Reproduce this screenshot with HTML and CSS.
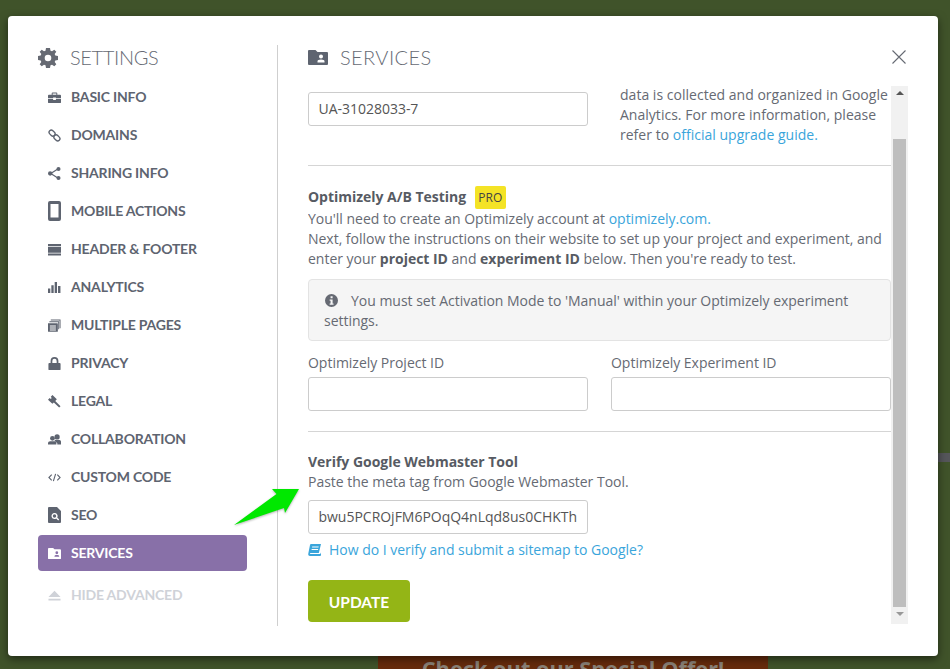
FILE: index.html
```html
<!DOCTYPE html>
<html lang="en">
<head>
<meta charset="utf-8">
<title>Settings - Services</title>
<link rel="stylesheet" href="styles.css">
</head>
<body>
<div class="backdrop-banner">Check out our Special Offer!</div>
<div class="backdrop-mark"></div>
<div class="modal">
  <aside class="sidebar">
    <h2 class="side-title">
      <svg class="gear" viewBox="0 0 20 20"><path d="M8 0h4l.5 2.700 1.500.6L16.300 1.700 18.300 3.700 16.700 6l.6 1.500 2.700.5v4l-2.700.5-.6 1.500 1.600 2.300-2 2-2.300-1.600-1.500.6-.5 2.700H8l-.5-2.700-1.500-.6-2.300 1.600-2-2L3.300 14l-.6-1.500L0 12V8l2.700-.5.6-1.500L1.700 3.700l2-2L6 3.300l1.500-.6z M10 6.700a3.300 3.300 0 1 0 0 6.600 3.300 3.300 0 0 0 0-6.600z" fill-rule="evenodd"/></svg>
      <span class="side-title-text">SETTINGS</span>
    </h2>
    <nav class="nav">
      <a class="nav-item"><svg class="ico" viewBox="0 0 14 14"><path d="M5 1.500h4a1 1 0 0 1 1 1V4h3a1 1 0 0 1 1 1v2.800H8.500V7h-3v.8H0V5a1 1 0 0 1 1-1h3V2.500a1 1 0 0 1 1-1zM5 4h4V2.600H5zM0 8.600h5.500v1h3v-1H14V12a1 1 0 0 1-1 1H1a1 1 0 0 1-1-1z" fill-rule="evenodd"/></svg>BASIC INFO</a>
      <a class="nav-item"><svg class="ico" viewBox="0 0 14 14"><g fill="none" stroke="currentColor" stroke-width="1.400"><rect x="-3.600" y="-2.400" width="7.200" height="4.800" rx="2.400" transform="translate(4.400 4.400) rotate(45)"/><rect x="-3.600" y="-2.400" width="7.200" height="4.800" rx="2.400" transform="translate(9.600 9.600) rotate(45)"/></g></svg>DOMAINS</a>
      <a class="nav-item"><svg class="ico" viewBox="0 0 14 14"><path d="M11 2 3 7l8 5" fill="none" stroke="currentColor" stroke-width="1.300"/><circle cx="11.300" cy="2.200" r="2.200"/><circle cx="2.300" cy="7" r="2.300"/><circle cx="11.300" cy="11.800" r="2.200"/></svg>SHARING INFO</a>
      <a class="nav-item"><svg class="ico ico-tall" viewBox="0 0 13 20"><path d="M2 0h9a2 2 0 0 1 2 2v16a2 2 0 0 1-2 2H2a2 2 0 0 1-2-2V2a2 2 0 0 1 2-2zm.5 3v13.500h8V3z" fill-rule="evenodd"/></svg>MOBILE ACTIONS</a>
      <a class="nav-item"><svg class="ico" viewBox="0 0 14 14"><path d="M0 1h14v2.400H0zM0 4.200h14v6.200H0zM0 11.200h14V13.500H0z"/></svg>HEADER &amp; FOOTER</a>
      <a class="nav-item"><svg class="ico" viewBox="0 0 14 14"><path d="M0 8h2.500v5H0zM3.600 4.500h2.500V13H3.600zM7.200 1h2.500v12H7.200zM10.800 5.500h2.600V13h-2.600z"/></svg>ANALYTICS</a>
      <a class="nav-item"><svg class="ico" viewBox="0 0 14 14"><path d="M3 .5h10.500V10h-1V1.500H3zM1.500 2.500H12V11h-1V3.500H1.500zM0 4.500h10a.6.600 0 0 1 .6.600v8a.6.600 0 0 1-.6.600H.6a.6.600 0 0 1-.6-.6zM2 7v1h6.500V7zm0 2.200v1h6.500v-1zm0 2.200v1h6.500v-1z" fill-rule="evenodd"/></svg>MULTIPLE PAGES</a>
      <a class="nav-item"><svg class="ico" viewBox="0 0 14 15"><path d="M7 0a4.500 4.500 0 0 1 4.500 4.500V7H13a1 1 0 0 1 1 1v6a1 1 0 0 1-1 1H1a1 1 0 0 1-1-1V8a1 1 0 0 1 1-1h1.500V4.500A4.500 4.500 0 0 1 7 0zm0 2a2.500 2.500 0 0 0-2.500 2.500V7h5V4.500A2.500 2.500 0 0 0 7 2z" fill-rule="evenodd"/></svg>PRIVACY</a>
      <a class="nav-item"><svg class="ico" viewBox="0 0 14 14"><path d="M4.800 0 9.500 4.700 7.800 6.400 13.500 12l-1.500 1.500L6.300 8 4.700 9.500 0 5l1.800-1.800 1.200 1 1-1-1-1.200z"/></svg>LEGAL</a>
      <a class="nav-item"><svg class="ico" viewBox="0 0 14 14"><circle cx="9.800" cy="4.200" r="2.800"/><path d="M7.500 7.500h4.800c1 0 1.700.8 1.700 1.800V12.500H10V11L7 8z"/><circle cx="4.800" cy="5.700" r="2.600"/><path d="M2.300 8.800h5c1 0 1.700.7 1.700 1.700v2H0v-1.500c0-1.200 1-2.200 2.300-2.200z"/></svg>COLLABORATION</a>
      <a class="nav-item"><svg class="ico" viewBox="0 0 14 14"><path d="M4 4 1 7l3 3M10 4l3 3-3 3M8.200 3 5.800 11" fill="none" stroke="currentColor" stroke-width="1.200"/></svg>CUSTOM CODE</a>
      <a class="nav-item"><svg class="ico ico-tall" viewBox="0 0 13 16"><path d="M1 0h8l4 4v11a1 1 0 0 1-1 1H1a1 1 0 0 1-1-1V1a1 1 0 0 1 1-1zm5.500 6a3 3 0 1 0 1.700 5.500l2 2 1-1-2-2A3 3 0 0 0 6.500 6zm0 1.300a1.700 1.700 0 1 1 0 3.400 1.700 1.700 0 0 1 0-3.400z" fill-rule="evenodd"/></svg>SEO</a>
      <a class="nav-item is-active"><svg class="ico" viewBox="0 0 14 12"><path d="M1 0h4.500L7 1.500h6a1 1 0 0 1 1 1V11a1 1 0 0 1-1 1H1a1 1 0 0 1-1-1V1a1 1 0 0 1 1-1zm8.500 3.700a1.500 1.500 0 1 0 0 3 1.500 1.500 0 0 0 0-3zM7 9.600h5V8.700c0-.7-.8-1.200-2.500-1.200S7 8 7 8.700z" fill-rule="evenodd"/></svg>SERVICES</a>
      <a class="nav-item is-muted"><svg class="ico" viewBox="0 0 14 14"><path d="M7 2l6.500 6.500H.5zM.5 10.500h13V12.500H.5z"/></svg>HIDE ADVANCED</a>
    </nav>
  </aside>

  <main class="main">
    <header class="main-head">
      <h2 class="main-title">
        <svg class="folder" viewBox="0 0 20 15"><path d="M1 0h6.500L9.500 2H19a1 1 0 0 1 1 1v11a1 1 0 0 1-1 1H1a1 1 0 0 1-1-1V1a1 1 0 0 1 1-1zm12 4.500a2 2 0 1 0 0 4 2 2 0 0 0 0-4zm-3.500 8h7v-1.200c0-1-1.200-1.800-3.500-1.800s-3.500.8-3.500 1.800z" fill-rule="evenodd"/></svg>
        SERVICES
      </h2>
      <svg class="close" viewBox="0 0 14 14"><path d="M.5.500l13 13M13.500.500l-13 13" fill="none" stroke="currentColor" stroke-width="1.100"/></svg>
    </header>

    <div class="scroll-wrap">
      <div class="content">
        <section class="ga-row">
          <div class="field-box">
            <div class="input">UA-31028033-7</div>
          </div>
          <p class="ga-note">data is collected and organized in Google Analytics. For more information, please refer to <a class="link">official upgrade guide.</a></p>
        </section>
        <hr class="rule rule-first">
        <section class="block">
          <h3 class="block-title">Optimizely A/B Testing <span class="pro">PRO</span></h3>
          <p class="text">You'll need to create an Optimizely account at <a class="link">optimizely.com.</a><br>
          Next, follow the instructions on their website to set up your project and experiment, and enter your <b>project ID</b> and <b>experiment ID</b> below. Then you're ready to test.</p>
          <div class="alert">
            <svg class="info" viewBox="0 0 14 14"><path d="M7 0a7 7 0 1 1 0 14A7 7 0 0 1 7 0zM6 2.500v2h2.200v-2zM5 6v1.200h1v3H5v1.300h4.200v-1.300h-1V6z" fill-rule="evenodd"/></svg>You must set Activation Mode to 'Manual' within your Optimizely experiment settings.
          </div>
          <div class="id-grid">
            <label class="field"><span class="field-label">Optimizely Project ID</span><span class="input"></span></label>
            <label class="field"><span class="field-label">Optimizely Experiment ID</span><span class="input"></span></label>
          </div>
        </section>
        <hr class="rule rule-second">
        <section class="block">
          <h3 class="block-title block-title-plain">Verify Google Webmaster Tool</h3>
          <p class="text">Paste the meta tag from Google Webmaster Tool.</p>
          <div class="field-box field-verify"><div class="input">bwu5PCROjFM6POqQ4nLqd8us0CHKTh</div></div>
          <a class="link help"><svg class="book" viewBox="0 0 13 12"><path d="M3 0h10l-2.200 9H2.500c-.8 0-.9.900 0 .9h9.700L13 8.500V11l-.5 1H2C.5 12 0 10.800.3 9.500L2 1c.1-.6.500-1 1-1zm1.200 2.500-.2 1h6.500l.2-1zm-.5 2.500-.2 1H10l.2-1z" fill-rule="evenodd"/></svg>How do I verify and submit a sitemap to Google?</a>
          <button class="update" type="button">UPDATE</button>
        </section>
      </div>
      <div class="scrollbar">
        <span class="arrow arrow-up"></span>
        <span class="thumb"></span>
        <span class="arrow arrow-down"></span>
      </div>
    </div>
  </main>

  <svg class="pointer" viewBox="0 0 70 48"><path d="M65 3H38l4.500 5L0 39l50-17 1 5z" fill="#00e800"/></svg>
</div>
</body>
</html>
```

FILE: styles.css
```css
* { box-sizing: border-box; }
html, body { height: 100%; margin: 0; }
body {
  position: relative;
  overflow: hidden;
  background: #40532a;
  padding: 16px 12px 13px 8px;
  font: 14px/20px "Open Sans", sans-serif;
  letter-spacing: -.02px;
  color: #666a73;
}
.backdrop-banner {
  position: absolute;
  left: 378px;
  top: 656px;
  width: 390px;
  height: 13px;
  overflow: hidden;
  background: #662b0c;
  color: #8a8177;
  font: 700 21.800px/26px "Open Sans", sans-serif;
  text-align: center;
}
.backdrop-mark {
  position: absolute;
  right: 0;
  top: 453px;
  width: 12px;
  height: 9px;
  background: #55565a;
}
.modal {
  position: relative;
  display: flex;
  height: 640px;
  padding: 29px 30px 30px;
  background: #fff;
  border-radius: 4px;
  box-shadow: 0 3px 9px rgba(0, 0, 0, .5);
}
.sidebar {
  width: 240px;
  border-right: 1px solid #cfcfcf;
  padding-right: 30px;
  flex: none;
}
.side-title {
  display: flex;
  align-items: center;
  gap: 12px;
  height: 24px;
  margin: 1px 0 9px;
  font: 300 20px/24px Lato, sans-serif;
  letter-spacing: -.35px;
  color: #666a73;
}
.side-title-text { position: relative; top: -1px; }
.gear { width: 20px; height: 20px; fill: #666a73; }
.nav { display: flex; flex-direction: column; gap: 2px; }
.nav-item {
  display: flex;
  align-items: center;
  height: 36px;
  padding-left: 10px;
  border-radius: 4px;
  font: 700 14px/36px Lato, sans-serif;
  letter-spacing: -.2px;
  color: #5e6470;
}
.ico { width: 13px; height: 13px; margin-right: 10px; fill: currentColor; flex: none; }
.ico-tall { height: 20px; }
.is-active { background: #8870a8; color: #fff; }
.is-muted { margin-top: 4px; color: #cfd2d8; }
.main { flex: 1; min-width: 0; padding-left: 30px; display: flex; flex-direction: column; }
.main-head { display: flex; justify-content: space-between; align-items: center; height: 24px; flex: none; }
.main-title {
  display: flex;
  align-items: center;
  gap: 12px;
  margin: 0;
  font: 300 20px/24px Lato, sans-serif;
  letter-spacing: .4px;
  color: #666a73;
}
.folder { width: 20px; height: 15px; fill: #5e6470; }
.close { width: 14px; height: 14px; margin-right: 2px; color: #666a73; }
.scroll-wrap {
  display: flex;
  height: 538px;
  margin-top: 17px;
  overflow: hidden;
  flex: none;
}
.content { width: 583px; flex: none; padding-top: 6px; }
.ga-row { display: flex; gap: 32px; }
.field-box { width: 280px; flex: none; }
.input {
  display: block;
  height: 34px;
  padding: 6px 9.500px;
  border: 1px solid #ccc;
  border-radius: 3px;
  background: #fff;
  color: #555;
  white-space: nowrap;
  overflow: hidden;
}
.ga-note { margin: -7px 0 0; width: 271px; letter-spacing: .02px; }
.link { color: #3aa5db; }
.rule { height: 1px; margin: 0; border: 0; background: #d5d5d5; }
.rule-first { margin-top: 20px; }
.rule-second { margin-top: 20px; }
.block-title { margin: 20px 0 0; font: 700 14px/22px "Open Sans", sans-serif; color: #575b63; }
.block-title-plain { margin-top: 20px; line-height: 20px; }
.pro {
  display: inline-block;
  width: 31px;
  height: 23px;
  margin-left: 5px;
  border-radius: 2px;
  background: #f4e326;
  font: 400 12px/23px "Open Sans", sans-serif;
  color: #444;
  text-align: center;
  vertical-align: top;
}
.text { margin: 0; }
.text b { color: #575b63; }
.alert {
  height: 62px;
  margin-top: 10px;
  padding: 11px 15px;
  border: 1px solid #e3e3e3;
  border-radius: 4px;
  background: #f5f5f5;
}
.info { width: 13px; height: 13px; margin: 0 13px 0 1px; fill: #666a73; vertical-align: -1px; }
.id-grid { display: grid; grid-template-columns: 280px 280px; gap: 23px; margin-top: 12px; }
.field { display: block; }
.field-label { display: block; height: 24px; }
.field-verify { margin-top: 8px; }
.help { display: block; margin-top: 6px; }
.book { width: 13px; height: 12px; margin-right: 8px; fill: #3aa5db; vertical-align: -1px; }
.update {
  display: block;
  width: 102px;
  height: 42px;
  margin-top: 20px;
  border: 0;
  border-radius: 4px;
  background: #94b516;
  color: #fff;
  font: 700 15.500px/42px Lato, sans-serif;
}
.scrollbar {
  display: flex;
  flex-direction: column;
  align-items: center;
  width: 17px;
  height: 538px;
  background: #f1f1f1;
  flex: none;
}
.arrow { width: 0; height: 0; border: 4px solid transparent; flex: none; }
.arrow-up { margin: 5px 0 0; border-top: 0; border-bottom: 4px solid #555; height: 4px; }
.arrow-down { margin: 5px 0 0; border-bottom: 0; border-top: 4px solid #999; height: 4px; }
.thumb { width: 13px; height: 468px; margin-top: 44px; background: #bebebe; flex: none; }
.pointer {
  position: absolute;
  left: 226px;
  top: 470px;
  width: 70px;
  height: 48px;
  filter: drop-shadow(0 1px 1px rgba(0, 0, 0, .3));
}
```
